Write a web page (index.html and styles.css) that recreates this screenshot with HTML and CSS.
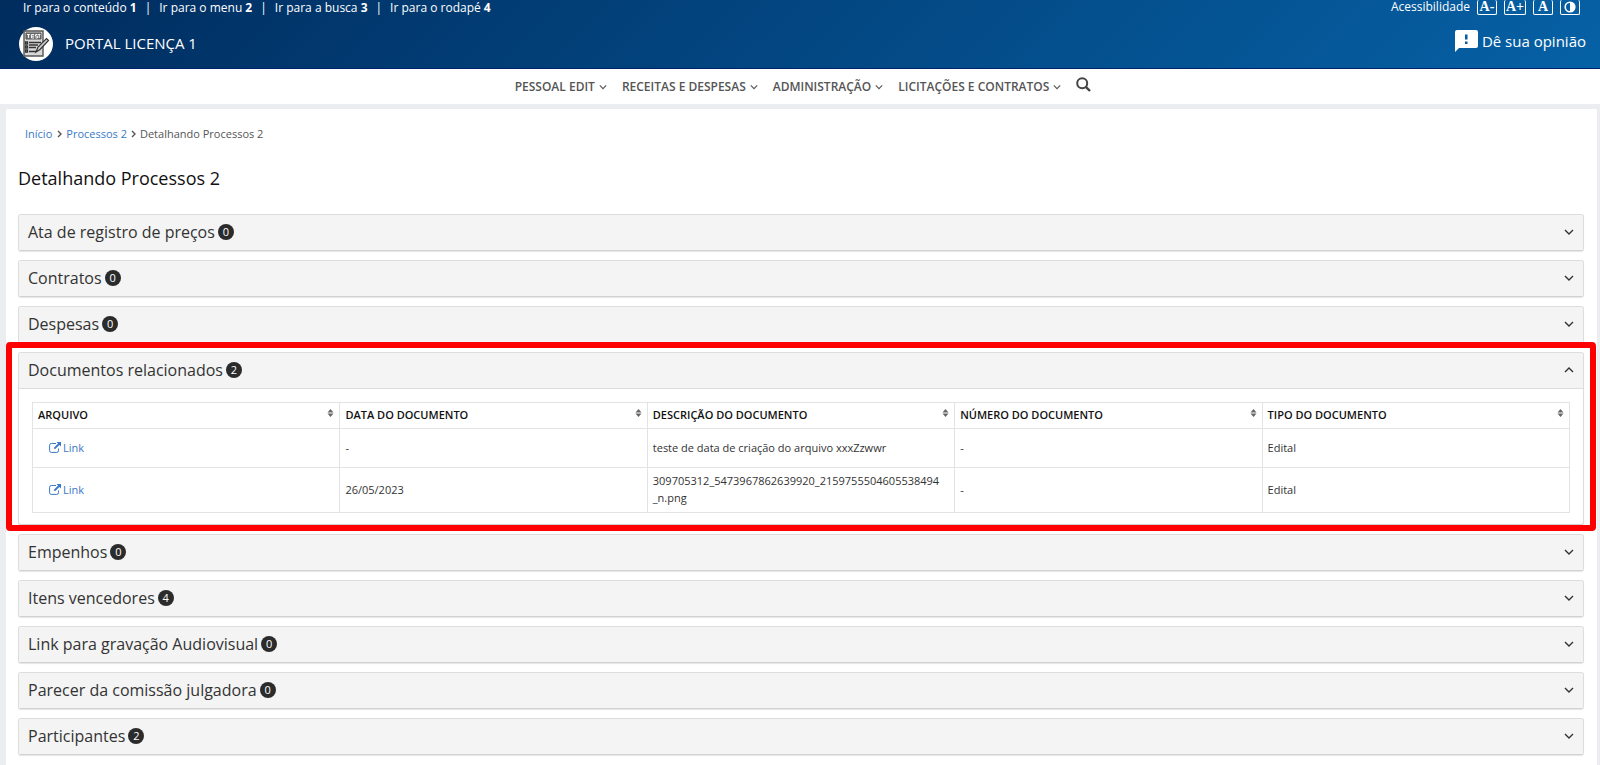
FILE: index.html
```html
<!DOCTYPE html>
<html lang="pt-BR">
<head>
<meta charset="utf-8">
<title>Portal Licença 1 - Detalhando Processos 2</title>
<link rel="stylesheet" href="styles.css">
</head>
<body>
<svg class="sprite" aria-hidden="true">
  <symbol id="chevron" viewBox="0 0 10 10"><path d="M1 3l4 4 4-4" fill="none" stroke="currentColor" stroke-width="1.4"/></symbol>
  <symbol id="sort" viewBox="0 0 6 8"><path d="M0 3.4L3 0l3 3.4zM0 4.6L3 8l3-3.4z" fill="currentColor"/></symbol>
  <symbol id="external" viewBox="0 0 12 11"><path d="M7 1.5H2.3A1.7 1.7 0 0 0 .6 3.200v5.500a1.700 1.700 0 0 0 1.700 1.700h5.500a1.700 1.700 0 0 0 1.700-1.700V6.500" fill="none" stroke="currentColor"/><path d="M7.500 0H12v4.500l-1.600-1.600L6 7.300 4.700 6l4.400-4.400z" fill="currentColor"/></symbol>
</svg>
<header class="header">
  <div class="topbar">
    <nav class="skip" aria-label="Atalhos">
      <a href="#conteudo">Ir para o conteúdo <b>1</b></a><span>|</span>
      <a href="#menu">Ir para o menu <b>2</b></a><span>|</span>
      <a href="#busca">Ir para a busca <b>3</b></a><span>|</span>
      <a href="#rodape">Ir para o rodapé <b>4</b></a>
    </nav>
    <div class="access">
      <a href="#acessibilidade">Acessibilidade</a>
      <button type="button" class="access-button">A-</button>
      <button type="button" class="access-button access-wide">A+</button>
      <button type="button" class="access-button">A</button>
      <button type="button" class="access-button" aria-label="Contraste"><svg class="contrast" viewBox="0 0 12 12"><circle cx="6" cy="6" r="4.800" fill="none" stroke="currentColor" stroke-width="1.600"/><path d="M6 1a5 5 0 0 1 0 10z" fill="currentColor"/></svg></button>
    </div>
  </div>
  <div class="brandbar">
    <a class="brand" href="#inicio">
      <svg class="logo" viewBox="0 0 34 34" aria-hidden="true">
        <circle cx="17" cy="17" r="17" fill="#fff"/>
        <path d="M5 4h19v25H5z" fill="#d8d8d8" stroke="#555" stroke-width="1.400"/>
        <path d="M7 6h15v6H7z" fill="#777" stroke="#555"/>
        <path d="M8 7.500h3M9.500 7.500V11M15 7.500h-2.500V11H15M12.500 9.200H15M18.500 7.500h-2V9.200h2V11h-2M19 7.500h2.500M20.300 7.500V11" fill="none" stroke="#fff" stroke-width=".9"/>
        <path d="M6.500 15h2v2h-2zM6.500 19h2v2h-2zM6.500 23h2v2h-2zM10 15.500h12M10 18h9M10 20.500h7M10 24.500h7" fill="none" stroke="#333" stroke-width="1.300"/>
        <path d="M17 25l2-5 8.500-8.500 2 2L21 22.500z" fill="#ccc" stroke="#333" stroke-width="1.200"/>
      </svg>
      <span>PORTAL LICENÇA 1</span>
    </a>
    <a class="opinion" href="#opiniao">
      <svg class="bubble" viewBox="0 0 23 22" aria-hidden="true"><path d="M2 0h19a2 2 0 0 1 2 2v14a2 2 0 0 1-2 2H4l-4 4V2a2 2 0 0 1 2-2z" fill="#fff"/><path d="M10 4.500h2.500v5H10zM10 11.500h2.500V14H10z" fill="#075b9f"/></svg>
      <span>Dê sua opinião</span>
    </a>
  </div>
</header>
<nav class="menu" id="menu">
  <a href="#pessoal">PESSOAL EDIT <svg><use href="#chevron"/></svg></a>
  <a href="#receitas">RECEITAS E DESPESAS <svg><use href="#chevron"/></svg></a>
  <a href="#administracao">ADMINISTRAÇÃO <svg><use href="#chevron"/></svg></a>
  <a href="#licitacoes">LICITAÇÕES E CONTRATOS <svg><use href="#chevron"/></svg></a>
  <button type="button" class="search" id="busca" aria-label="Buscar"><svg viewBox="0 0 15 15"><circle cx="6.200" cy="6.200" r="5" fill="none" stroke="currentColor" stroke-width="2"/><path d="M9.800 9.800l4.200 4.200" stroke="currentColor" stroke-width="2.400"/></svg></button>
</nav>
<main class="content" id="conteudo">
  <nav class="crumbs" aria-label="Navegação">
    <a class="crumb-home" href="#inicio">Início</a>
    <svg viewBox="0 0 5 8"><path d="M1 1l3 3-3 3" fill="none" stroke="currentColor" stroke-width="1.400"/></svg>
    <a href="#processos">Processos 2</a>
    <svg viewBox="0 0 5 8"><path d="M1 1l3 3-3 3" fill="none" stroke="currentColor" stroke-width="1.400"/></svg>
    <span>Detalhando Processos 2</span>
  </nav>
  <h1>Detalhando Processos 2</h1>
  <div class="panels">
    <section class="panel"><button type="button" aria-expanded="false">Ata de registro de preços <span class="badge">0</span><svg class="toggle"><use href="#chevron"/></svg></button></section>
    <section class="panel"><button type="button" aria-expanded="false">Contratos <span class="badge">0</span><svg class="toggle"><use href="#chevron"/></svg></button></section>
    <section class="panel"><button type="button" aria-expanded="false">Despesas <span class="badge">0</span><svg class="toggle"><use href="#chevron"/></svg></button></section>
    <section class="panel open">
      <button type="button" aria-expanded="true">Documentos relacionados <span class="badge">2</span><svg class="toggle"><use href="#chevron"/></svg></button>
      <div class="panel-body">
        <table>
          <thead>
            <tr>
              <th scope="col"><div>ARQUIVO <svg><use href="#sort"/></svg></div></th>
              <th scope="col"><div>DATA DO DOCUMENTO <svg><use href="#sort"/></svg></div></th>
              <th scope="col"><div>DESCRIÇÃO DO DOCUMENTO <svg><use href="#sort"/></svg></div></th>
              <th scope="col"><div>NÚMERO DO DOCUMENTO <svg><use href="#sort"/></svg></div></th>
              <th scope="col"><div>TIPO DO DOCUMENTO <svg><use href="#sort"/></svg></div></th>
            </tr>
          </thead>
          <tbody>
            <tr>
              <td><a class="file" href="#arquivo-1"><svg><use href="#external"/></svg>Link</a></td>
              <td>-</td>
              <td>teste de data de criação do arquivo xxxZzwwr</td>
              <td>-</td>
              <td>Edital</td>
            </tr>
            <tr>
              <td><a class="file" href="#arquivo-2"><svg><use href="#external"/></svg>Link</a></td>
              <td>26/05/2023</td>
              <td>309705312_5473967862639920_2159755504605538494<wbr>_n.png</td>
              <td>-</td>
              <td>Edital</td>
            </tr>
          </tbody>
        </table>
      </div>
      <div class="highlight"></div>
    </section>
    <section class="panel"><button type="button" aria-expanded="false">Empenhos <span class="badge">0</span><svg class="toggle"><use href="#chevron"/></svg></button></section>
    <section class="panel"><button type="button" aria-expanded="false">Itens vencedores <span class="badge">4</span><svg class="toggle"><use href="#chevron"/></svg></button></section>
    <section class="panel"><button type="button" aria-expanded="false">Link para gravação Audiovisual <span class="badge">0</span><svg class="toggle"><use href="#chevron"/></svg></button></section>
    <section class="panel"><button type="button" aria-expanded="false">Parecer da comissão julgadora <span class="badge">0</span><svg class="toggle"><use href="#chevron"/></svg></button></section>
    <section class="panel"><button type="button" aria-expanded="false">Participantes <span class="badge">2</span><svg class="toggle"><use href="#chevron"/></svg></button></section>
  </div>
</main>
</body>
</html>
```
FILE: styles.css
```css
* {
  box-sizing: border-box;
}

body {
  margin: 0;
  background: #ebedf1;
  color: #333;
  font: 11px/17px "Open Sans", "Noto Sans", sans-serif;
}

a {
  color: #3a78c8;
  text-decoration: none;
}

button {
  border: 0;
  padding: 0;
  background: none;
  color: inherit;
  font: inherit;
  cursor: pointer;
}

.sprite {
  display: none;
}

.header {
  border-bottom: 1px solid #00206a;
  background: linear-gradient(135deg, #002c5e 0%, #0661a5 100%);
  color: #fff;
}

.header a {
  color: #fff;
}

.topbar {
  display: flex;
  justify-content: space-between;
  height: 16px;
  padding: 0 20px 0 23px;
  font-size: 12px;
  line-height: 16px;
}

.skip {
  display: flex;
  gap: 8px;
}

.access {
  display: flex;
  gap: 7px;
}

.access a {
  line-height: 13px;
}

.access-button {
  display: flex;
  align-items: center;
  justify-content: center;
  width: 20px;
  height: 15px;
  border: 1px solid #fff;
  border-top: 0;
  border-radius: 2px;
  font: bold 14px/14px "Liberation Serif", serif;
}

.access-wide {
  width: 22px;
}

.contrast {
  width: 12px;
  height: 12px;
}

.brandbar {
  display: flex;
  align-items: flex-start;
  justify-content: space-between;
  padding: 11px 14px 7px 19px;
  font-size: 15px;
  line-height: 20px;
}

.brand {
  display: flex;
  align-items: center;
  gap: 12px;
}

.brand span {
  padding-bottom: 2px;
}

.logo {
  width: 34px;
  height: 34px;
}

.opinion {
  display: flex;
  align-items: center;
  gap: 4px;
  padding-top: 3px;
}

.bubble {
  width: 23px;
  height: 22px;
}

.menu {
  display: flex;
  align-items: center;
  justify-content: center;
  gap: 15px;
  height: 35px;
  padding-left: 6px;
  background: #fff;
  font-size: 12px;
  font-weight: 600;
}

.menu a {
  display: flex;
  align-items: center;
  gap: 4px;
  color: #555;
}

.menu a svg {
  width: 8px;
  height: 8px;
}

.search {
  display: flex;
  padding-bottom: 4px;
  color: #444;
}

.search svg {
  width: 15px;
  height: 15px;
}

.content {
  margin: 5px 3px 0 6px;
  padding: 16px 13px 24px 12px;
  border-radius: 2px;
  background: #fff;
}

.crumbs {
  display: flex;
  align-items: center;
  gap: 4px;
  padding-left: 7px;
  color: #555;
}

.crumbs svg {
  width: 5px;
  height: 8px;
}

.crumb-home {
  margin-right: 1px;
}

h1 {
  margin: 24px 0;
  color: #111;
  font-size: 18px;
  font-weight: 400;
  line-height: 24px;
}

.panels {
  display: flex;
  flex-direction: column;
  gap: 9px;
}

.panel {
  position: relative;
  border: 1px solid #ddd;
  border-bottom-color: #d2d2d2;
  border-radius: 3px;
  background: #fff;
  box-shadow: 0 1px 1px #e6e6e6;
}

.panel > button {
  display: flex;
  align-items: center;
  gap: 3px;
  width: 100%;
  height: 35px;
  padding: 0 9px 2px;
  border-radius: 3px 3px 0 0;
  background: #f4f4f4;
  font-size: 16px;
  line-height: 22px;
}

.badge {
  width: 16px;
  height: 16px;
  border-radius: 8px;
  background: #2b2b2b;
  color: #fff;
  font-size: 11px;
  line-height: 16px;
  text-align: center;
}

.toggle {
  width: 10px;
  height: 10px;
  margin-left: auto;
}

.open .toggle {
  transform: rotate(180deg);
}

.panel-body {
  padding: 13px 13px 11px;
  border-top: 1px solid #ddd;
}

table {
  width: 100%;
  border-collapse: collapse;
  table-layout: fixed;
}

th,
td {
  padding: 4px 5px 6px;
  border: 1px solid #e2e3e6;
  text-align: left;
}

th {
  height: 26px;
  padding: 0 5px 2px;
  color: #111;
  font-weight: 600;
}

th div {
  display: flex;
  align-items: center;
  justify-content: space-between;
}

th svg {
  width: 7px;
  height: 8px;
  margin-bottom: 4px;
  color: #666;
}

td {
  height: 39px;
}

.file {
  display: flex;
  align-items: center;
  gap: 2px;
  padding-left: 11px;
}

.file svg {
  width: 12px;
  height: 11px;
}

.highlight {
  position: absolute;
  inset: -11px -13px -7px;
  border: 6px solid #f00;
  border-radius: 4px;
  pointer-events: none;
}
```
